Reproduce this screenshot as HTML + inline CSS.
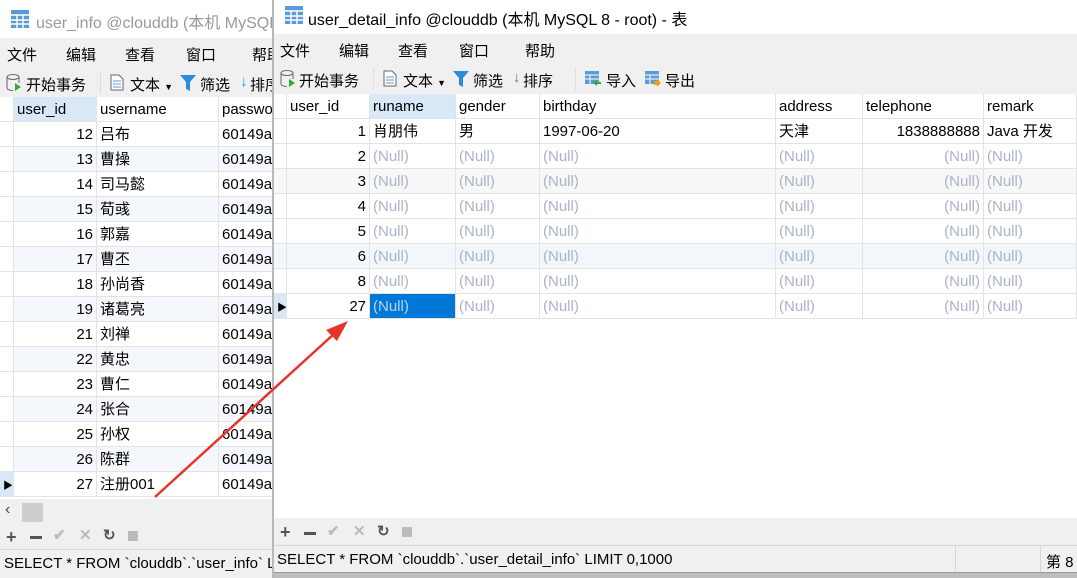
<!DOCTYPE html>
<html><head><meta charset="utf-8"><style>
*{margin:0;padding:0;box-sizing:border-box}
body{width:1077px;height:578px;overflow:hidden;position:relative;background:#fff;font-family:"Liberation Sans","Noto Sans CJK SC",sans-serif;font-size:15px;color:#000}
.a{position:absolute}
.t{white-space:nowrap}
.grey{background:#f0f0f0}
.cell{position:absolute;height:25px;line-height:25px;padding:0 3px;white-space:nowrap;overflow:hidden;border-right:1px solid #e3e3e3;border-bottom:1px solid #e3e3e3}
.n{color:#aab3c8}
.r{text-align:right}
.tb{color:#bbb;font-size:18px;font-weight:bold}
</style></head><body>

<!-- LEFT WINDOW -->
<div class="a" style="left:0;top:0;width:276px;height:578px;overflow:hidden;background:#fff">
  <div class="a" style="left:0;top:0;width:276px;height:37px;background:#fff"></div>
  <svg class="a" style="left:10px;top:9px" width="20" height="20"><rect x="1" y="1" width="18" height="18" fill="#5b9bd5"/><g stroke="#fff" stroke-width="1.4"><line x1="1" y1="6" x2="19" y2="6"/><line x1="1" y1="11" x2="19" y2="11"/><line x1="1" y1="15" x2="19" y2="15"/><line x1="7" y1="6" x2="7" y2="19"/><line x1="13" y1="6" x2="13" y2="19"/></g></svg>
  <div class="a t" style="left:36px;top:9px;font-size:16px;color:#999">user_info @clouddb (本机 MySQL 8 - root) - 表</div>
  <div class="a grey" style="left:0;top:38px;width:276px;height:60px"></div>
  <div class="a t" style="left:7px;top:44px">文件</div>
  <div class="a t" style="left:66px;top:44px">编辑</div>
  <div class="a t" style="left:125px;top:44px">查看</div>
  <div class="a t" style="left:186px;top:44px">窗口</div>
  <div class="a t" style="left:252px;top:44px">帮助</div>
  <svg class="a" style="left:6px;top:74px" width="16" height="18"><ellipse cx="7" cy="3" rx="6" ry="2.5" fill="none" stroke="#666"/><path d="M1 3v11c0 1.5 3 2.5 6 2.5M13 3v6" fill="none" stroke="#666"/><path d="M9 9l6 4-6 4z" fill="#3a3"/></svg>
  <div class="a t" style="left:26px;top:74px">开始事务</div>
  <div class="a" style="left:100px;top:72px;width:1px;height:22px;background:#ddd"></div>
  <svg class="a" style="left:110px;top:74px" width="14" height="17"><path d="M1 1h8l4 4v11H1z" fill="#fff" stroke="#666"/><g stroke="#5b9bd5"><line x1="3" y1="7" x2="11" y2="7"/><line x1="3" y1="10" x2="11" y2="10"/><line x1="3" y1="13" x2="11" y2="13"/></g></svg>
  <div class="a t" style="left:130px;top:74px">文本 <span style="font-size:9px">▼</span></div>
  <svg class="a" style="left:180px;top:75px" width="16" height="16"><path d="M0 0h16l-6 7v9l-4-2V7z" fill="#2f8ad8"/></svg>
  <div class="a t" style="left:200px;top:74px">筛选</div>
  <div class="a t" style="left:240px;top:73px;color:#2f8ad8">↓</div>
  <div class="a t" style="left:250px;top:74px">排序</div>
  <!-- grid -->
  <div class="a" style="left:0;top:97px;width:276px;height:402px;background:#fff"></div>
  <div id="lg"></div>
  <div class="a grey" style="left:0;top:499px;width:276px;height:79px"></div>
  <div class="a t" style="left:5px;top:501px;font-size:16px;color:#444">‹</div>
  <div class="a" style="left:22px;top:503px;width:21px;height:19px;background:#cdcdcd"></div>
  <div class="a t" style="left:6px;top:527px;font-size:18px;color:#555;font-weight:bold">+</div>
  <div class="a" style="left:30px;top:536px;width:12px;height:3px;background:#555"></div>
  <div class="a t tb" style="left:53px;top:526px;font-size:15px">✔</div>
  <div class="a t tb" style="left:79px;top:526px;font-size:15px">✕</div>
  <div class="a t" style="left:103px;top:526px;font-size:15px;color:#555;font-weight:bold">↻</div>
  <div class="a" style="left:128px;top:531px;width:10px;height:10px;background:#bbb"></div>
  <div class="a" style="left:0;top:549px;width:276px;height:1px;background:#d6d6d6"></div>
  <div class="a t" style="left:4px;top:555px">SELECT * FROM `clouddb`.`user_info` LIMIT</div>
</div>

<!-- RIGHT WINDOW -->
<div class="a" style="left:272px;top:0;width:2px;height:578px;background:#b8b8b8"></div>
<div class="a" style="left:274px;top:0;width:803px;height:578px;background:#fff;overflow:hidden">
  <svg class="a" style="left:10px;top:5px" width="20" height="20"><rect x="1" y="1" width="18" height="18" fill="#5b9bd5"/><g stroke="#fff" stroke-width="1.4"><line x1="1" y1="6" x2="19" y2="6"/><line x1="1" y1="11" x2="19" y2="11"/><line x1="1" y1="15" x2="19" y2="15"/><line x1="7" y1="6" x2="7" y2="19"/><line x1="13" y1="6" x2="13" y2="19"/></g></svg>
  <div class="a t" style="left:34px;top:6px;font-size:16px">user_detail_info @clouddb (本机 MySQL 8 - root) - 表</div>
  <div class="a grey" style="left:0;top:34px;width:803px;height:60px"></div>
  <div class="a t" style="left:6px;top:40px">文件</div>
  <div class="a t" style="left:65px;top:40px">编辑</div>
  <div class="a t" style="left:124px;top:40px">查看</div>
  <div class="a t" style="left:185px;top:40px">窗口</div>
  <div class="a t" style="left:251px;top:40px">帮助</div>
  <svg class="a" style="left:6px;top:70px" width="16" height="18"><ellipse cx="7" cy="3" rx="6" ry="2.5" fill="none" stroke="#666"/><path d="M1 3v11c0 1.5 3 2.5 6 2.5M13 3v6" fill="none" stroke="#666"/><path d="M9 9l6 4-6 4z" fill="#3a3"/></svg>
  <div class="a t" style="left:25px;top:70px">开始事务</div>
  <div class="a" style="left:99px;top:68px;width:1px;height:22px;background:#ddd"></div>
  <svg class="a" style="left:109px;top:70px" width="14" height="17"><path d="M1 1h8l4 4v11H1z" fill="#fff" stroke="#666"/><g stroke="#5b9bd5"><line x1="3" y1="7" x2="11" y2="7"/><line x1="3" y1="10" x2="11" y2="10"/><line x1="3" y1="13" x2="11" y2="13"/></g></svg>
  <div class="a t" style="left:129px;top:70px">文本 <span style="font-size:9px">▼</span></div>
  <svg class="a" style="left:179px;top:71px" width="16" height="16"><path d="M0 0h16l-6 7v9l-4-2V7z" fill="#2f8ad8"/></svg>
  <div class="a t" style="left:199px;top:70px">筛选</div>
  <div class="a t" style="left:239px;top:69px;color:#2f8ad8">↓</div>
  <div class="a t" style="left:249px;top:70px">排序</div>
  <div class="a" style="left:301px;top:68px;width:1px;height:22px;background:#ddd"></div>
  <svg class="a" style="left:311px;top:71px" width="16" height="16"><rect x="0" y="0" width="14" height="13" fill="#5b9bd5"/><g stroke="#fff"><line x1="0" y1="4" x2="14" y2="4"/><line x1="0" y1="8" x2="14" y2="8"/><line x1="5" y1="4" x2="5" y2="13"/></g><path d="M8 12l4-3v2h4v2h-4v2z" fill="#3a3"/></svg>
  <div class="a t" style="left:332px;top:70px">导入</div>
  <svg class="a" style="left:371px;top:71px" width="16" height="16"><rect x="0" y="0" width="14" height="13" fill="#5b9bd5"/><g stroke="#fff"><line x1="0" y1="4" x2="14" y2="4"/><line x1="0" y1="8" x2="14" y2="8"/><line x1="5" y1="4" x2="5" y2="13"/></g><path d="M9 10h3v-2l4 4-4 4v-2H9z" fill="#f39c12"/></svg>
  <div class="a t" style="left:391px;top:70px">导出</div>
  <div id="rg"></div>
  <div class="a grey" style="left:0;top:518px;width:803px;height:60px"></div>
  <div class="a t" style="left:6px;top:522px;font-size:18px;color:#555;font-weight:bold">+</div>
  <div class="a" style="left:30px;top:532px;width:12px;height:3px;background:#555"></div>
  <div class="a t tb" style="left:53px;top:522px;font-size:15px">✔</div>
  <div class="a t tb" style="left:79px;top:522px;font-size:15px">✕</div>
  <div class="a t" style="left:103px;top:522px;font-size:15px;color:#555;font-weight:bold">↻</div>
  <div class="a" style="left:128px;top:527px;width:10px;height:10px;background:#bbb"></div>
  <div class="a" style="left:0;top:545px;width:803px;height:1px;background:#d6d6d6"></div>
  <div class="a" style="left:681px;top:546px;width:1px;height:26px;background:#d6d6d6"></div>
  <div class="a" style="left:766px;top:546px;width:1px;height:26px;background:#d6d6d6"></div>
  <div class="a t" style="left:3px;top:551px">SELECT * FROM `clouddb`.`user_detail_info` LIMIT 0,1000</div>
  <div class="a t" style="left:772px;top:551px">第 8</div>
  <div class="a" style="left:0;top:572px;width:803px;height:6px;background:#bdbdbd;border-top:1px solid #999"></div>
</div>

<svg class="a" style="left:0;top:0" width="1077" height="578"><line x1="155" y1="497" x2="335" y2="333" stroke="#e8332a" stroke-width="2.5"/><path d="M348 321L326 330L337 341Z" fill="#e8332a"/></svg>

<script>
function cell(p,x,y,w,h,txt,cls,bg){var d=document.createElement('div');d.className='cell '+(cls||'');d.style.left=x+'px';d.style.top=y+'px';d.style.width=w+'px';d.style.height=h+'px';d.style.lineHeight=h+'px';if(bg)d.style.background=bg;d.innerHTML=txt;p.appendChild(d);}
var lg=document.getElementById('lg').parentNode;
var lc=[[0,14],[14,83],[97,122],[219,80]];
var lh=['','user_id','username','passwo'];
lc.forEach(function(c,i){cell(lg,c[0],97,c[1],25,lh[i],'',i==1?'#d9e8f7':(i==0?'#fff':'#fff'));});
var ld=[[12,'吕布'],[13,'曹操'],[14,'司马懿'],[15,'荀彧'],[16,'郭嘉'],[17,'曹丕'],[18,'孙尚香'],[19,'诸葛亮'],[21,'刘禅'],[22,'黄忠'],[23,'曹仁'],[24,'张合'],[25,'孙权'],[26,'陈群'],[27,'注册001']];
ld.forEach(function(r,i){var y=122+i*25;var bg=i%2?'#f4f8fc':'#fff';var last=i==14;
cell(lg,0,y,14,25,last?'<span style="font-size:10px">▶</span>':'','',last?'#d9e8f7':'#fff');
cell(lg,14,y,83,25,r[0],'r',bg);cell(lg,97,y,122,25,r[1],'',bg);cell(lg,219,y,80,25,'60149a','',bg);});
var rg=document.getElementById('rg').parentNode;
var rc=[[0,13],[13,83],[96,86],[182,84],[266,236],[502,87],[589,121],[710,93]];
var rh=['','user_id','runame','gender','birthday','address','telephone','remark'];
rc.forEach(function(c,i){cell(rg,c[0],94,c[1],25,rh[i],'',i==2?'#d9e8f7':'#fff');});
var ids=[1,2,3,4,5,6,8,27];
var N='(Null)';
ids.forEach(function(id,i){var y=119+i*25;var bg=i==2?'#f7f7f7':(i==5?'#f2f7fc':'#fff');var last=i==7;
var vals=i==0?['肖朋伟','男','1997-06-20','天津','1838888888','Java 开发']:[N,N,N,N,N,N];
cell(rg,0,y,13,25,last?'<span style="font-size:10px">▶</span>':'','',last?'#d9e8f7':bg);
cell(rg,13,y,83,25,id,'r',bg);
for(var k=0;k<6;k++){var c=rc[k+2];var cls=(i==0?'':'n')+(k==4?' r':'');var b=bg;if(last&&k==0){b='#0078d7';cls='" style="color:#fff';}
cell(rg,c[0],y,c[1],25,vals[k],(i==0?'':'n')+(k==4?' r':''),last&&k==0?'#0078d7':bg);}
});
var sel=rg.querySelectorAll('.cell');sel.forEach(function(e){if(e.style.background.indexOf('0, 120, 215')>=0){e.style.color='#b8d4f0';}});
</script>
</body></html>
